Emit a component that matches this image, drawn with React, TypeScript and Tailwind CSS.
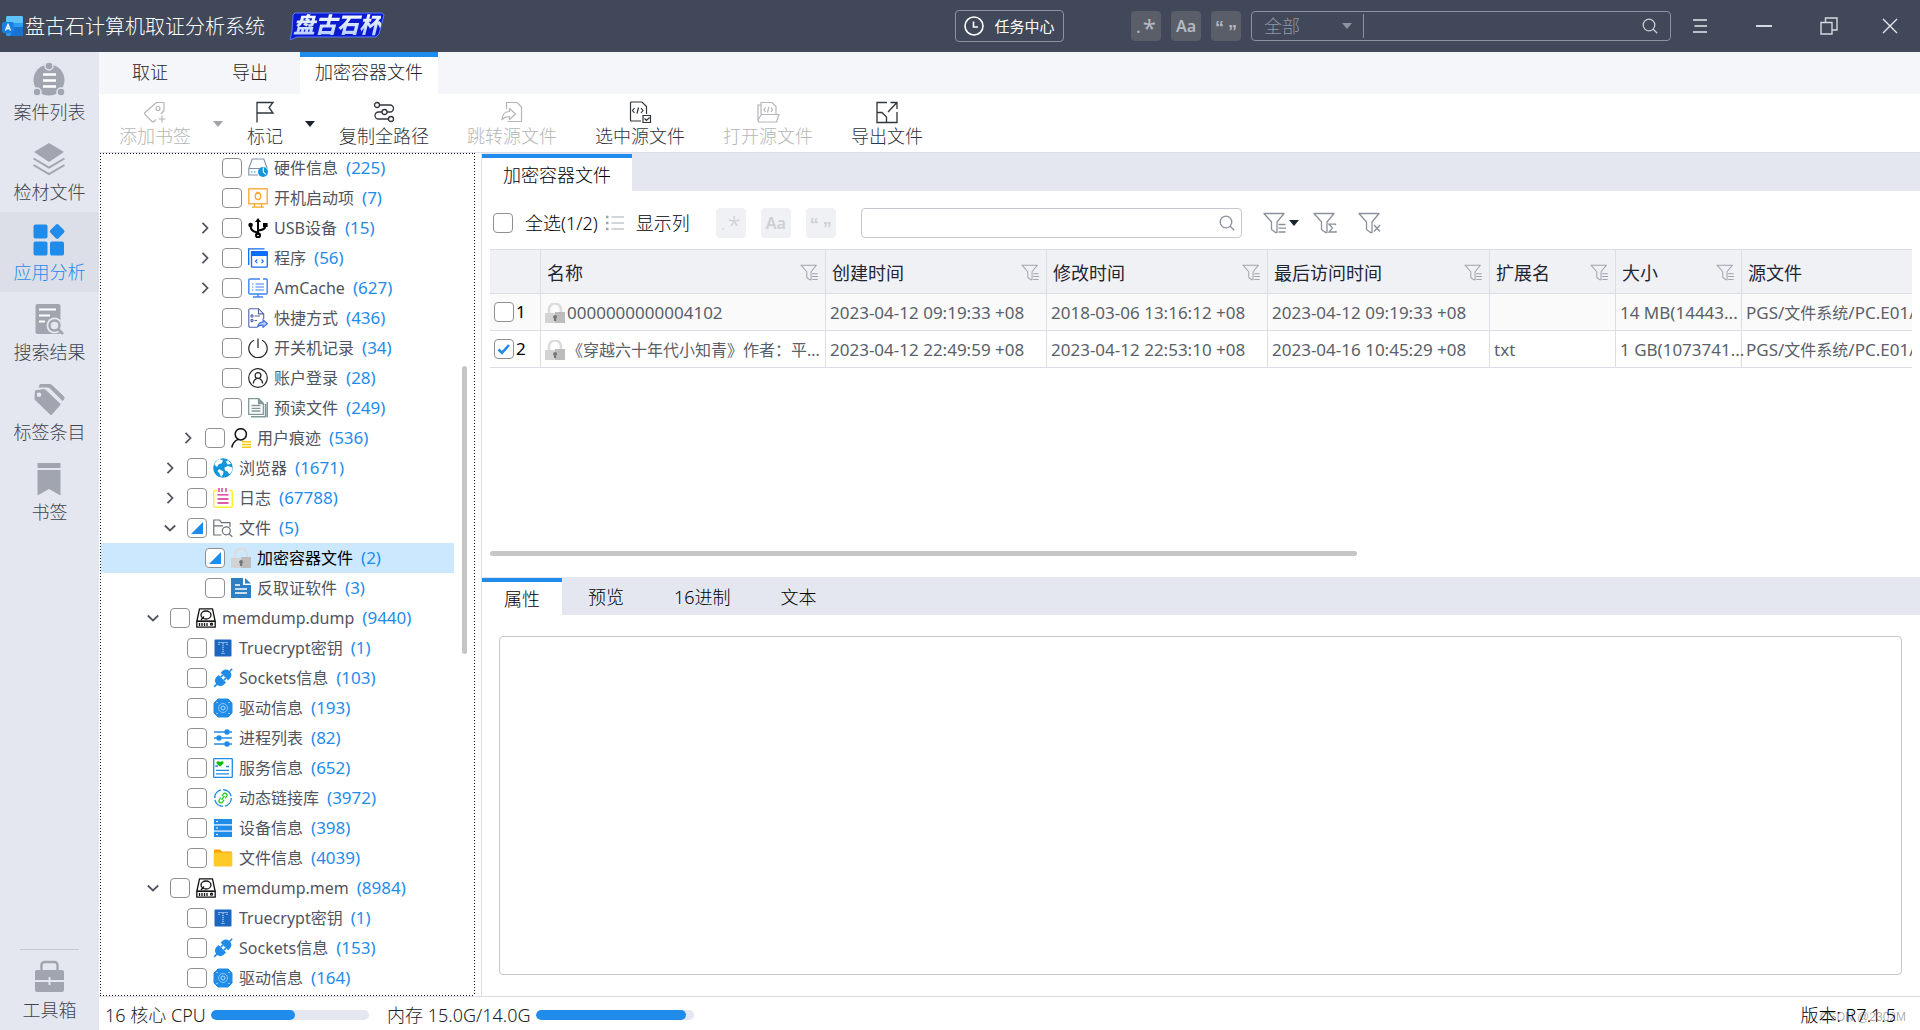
import React from "react";

const LATIN = "font-['Noto_Sans','Noto_Sans_CJK_SC',sans-serif]";

type IconProps = { className?: string };

/* ---------- shared glyphs ---------- */

const Caret = ({ className = "" }: IconProps) => (
  <svg viewBox="0 0 10 6" className={`h-1.5 w-2.5 ${className}`} fill="currentColor">
    <path d="M0 0h10L5 6z" />
  </svg>
);

const Magnifier = ({ className = "" }: IconProps) => (
  <svg viewBox="0 0 16 16" className={`size-4 ${className}`} fill="none" stroke="currentColor" strokeWidth="1.3">
    <circle cx="7" cy="7" r="5.8" />
    <path d="M11.2 11.2 15.2 15.2" />
  </svg>
);

const Funnel = ({ kind, className = "" }: { kind: "list" | "sum" | "clear"; className?: string }) => (
  <svg viewBox="0 0 24 22" className={className} fill="none" stroke="currentColor" strokeWidth="1.3">
    <path d="M1 1.5h20l-7 8.5v10.5h-1.5L8.5 17.5V10z" strokeLinejoin="round" />
    {kind === "list" && <path d="M15.5 12.5h7M15.5 16.2h7.5M15.5 20h7" />}
    {kind === "sum" && <path d="M22.5 13.2v-1H16l3.5 3.8L16 20h7v-1.3" fill="none" />}
    {kind === "clear" && <path d="m16 13 6 6.5M22 13l-6 6.5" />}
  </svg>
);

const Lock = ({ className = "" }: IconProps) => (
  <svg viewBox="0 0 20 20" className={`size-5 shrink-0 ${className}`}>
    <path d="M4 10V6.5a6 6 0 0 1 12 0V10" fill="none" stroke="#dcdcdc" strokeWidth="2.6" />
    <path d="M0 10h20v10H0z" fill="#d3d3d3" />
    <path d="M10 9h10v11H10z" fill="#bcbcbc" />
    <path d="M10 12a2 2 0 0 1 1.2 3.6V18H8.9v-2.4A2 2 0 0 1 10 12z" fill="#777" />
  </svg>
);

/* ---------- tree icons ---------- */

const svg20 = "size-5 shrink-0";

const icons: Record<string, React.ReactNode> = {
  hardware: (
    <svg viewBox="0 0 20 20" className={svg20} fill="none" stroke="#7f90a8" strokeWidth="1.1">
      <path d="M.8 10.5 4.2 1h11.6l3.4 9.5M.8 10.5V17H10M.8 10.5h11" />
      <path d="M3 14h1.5M6 14h1.5" stroke="#1296db" />
      <circle cx="15" cy="14" r="5" fill="#1296db" stroke="none" />
      <path d="M15.3 9.5v4.6l2.6 2.2" stroke="#fff" />
    </svg>
  ),
  startup: (
    <svg viewBox="0 0 20 20" className={svg20} fill="none" stroke="#f8a72c" strokeWidth="1.3">
      <rect x=".8" y=".8" width="18.4" height="15" />
      <path d="M6.5 16v3M13.5 16v3M4 19.2h12" />
      <ellipse cx="10" cy="8.3" rx="2.8" ry="3.3" />
      <path d="M9 5V3.8M11 5V3.8" />
    </svg>
  ),
  usb: (
    <svg viewBox="0 0 20 20" className={svg20} fill="none" stroke="#000" strokeWidth="2">
      <path d="M10 17V3M10 14.5c-4-.5-7.3-1.7-7.3-6M10 12.5c4-.5 7.3-1 7.3-4.5" />
      <path d="m7 4 3-4 3 4zM15 5h4.6v4H15z" fill="#000" stroke="none" />
      <circle cx="2.6" cy="7" r="2.3" fill="#000" stroke="none" />
      <circle cx="10" cy="17.3" r="2" />
    </svg>
  ),
  program: (
    <svg viewBox="0 0 20 20" className={svg20} fill="none" stroke="#0b6dfb" strokeWidth="1.3">
      <path d="M.7 17V.8H16.5" />
      <rect x="3.5" y="3.6" width="15.8" height="15.6" rx=".8" />
      <path d="M3 3h16.5v5H3z" fill="#0b6dfb" stroke="none" />
      <path d="m9.300 11.500-1.800 1.800 1.800 1.800M13.500 11.500l1.800 1.800-1.800 1.800" strokeWidth="1.100" />
    </svg>
  ),
  amcache: (
    <svg viewBox="0 0 20 20" className={svg20} fill="none" stroke="#3f83f8" strokeWidth="1.4">
      <path d="M12 1H1.8a1 1 0 0 0-1 1v13a1 1 0 0 0 1 1h16.4a1 1 0 0 0 1-1V2a1 1 0 0 0-1-1H15M10 16v3M5 19h10" />
      <path d="M4 6h1.4M4 9h1.4M4 12h1.4M7.500 6H16M7.500 9H16M7.500 12H16" strokeWidth="1.200" />
    </svg>
  ),
  shortcut: (
    <svg viewBox="0 0 20 20" className={svg20} fill="none" stroke="#4f62a8" strokeWidth="1.1">
      <path d="M9 19.3H2a1.2 1.2 0 0 1-1.2-1.2V1.9A1.2 1.2 0 0 1 2 .7h8.5l5.2 5.2V11M10.5.7v5.2h5" />
      <circle cx="4" cy="8" r="1.1" />
      <circle cx="4" cy="12.5" r="1.1" />
      <path d="M6.5 8H12M6.5 12.5H9" />
      <path d="M9.5 18.800c.8-3.300 2.400-4.700 5.500-4.700v-2.300l4.400 4-4.400 3.600v-2.200c-2.400-.2-4 .4-5.500 1.600z" fill="#b9cffb" stroke="#3f6fe0" />
    </svg>
  ),
  power: (
    <svg viewBox="0 0 20 20" className={svg20} fill="none" stroke="#222" strokeWidth="1.2">
      <path d="M10 .5V10M6 2.200a9.200 9.200 0 1 0 8 0" />
    </svg>
  ),
  account: (
    <svg viewBox="0 0 20 20" className={svg20} fill="none" stroke="#222" strokeWidth="1.2">
      <circle cx="10" cy="10" r="9.300" />
      <circle cx="10" cy="7.500" r="2.900" />
      <path d="M5.300 15.500c.2-3 1.700-4.300 3.400-5M14.700 15.500c-.2-3-1.700-4.300-3.400-5" />
    </svg>
  ),
  prefetch: (
    <svg viewBox="0 0 20 20" className={svg20} fill="none" stroke="#82989a" strokeWidth="1.300">
      <path d="M.7.7h9.800l4.800 4.800v10.800H.7z" />
      <path d="M10.500.7v4.800h4.800z" fill="#82989a" />
      <path d="M3.500 7.500h9M3.500 10.300h9M3.500 13h9" />
      <path d="M3 18.700h14.500V6M19.300 4v15.300" strokeWidth="1.500" />
    </svg>
  ),
  trace: (
    <svg viewBox="0 0 20 20" className={svg20} fill="none">
      <circle cx="9.800" cy="6.300" r="5.600" stroke="#111" strokeWidth="1.500" />
      <path d="M7 11.300C3.500 13 1.500 15.500.8 19.500" stroke="#111" strokeWidth="1.500" />
      <path d="M11 13.800h9M11 16.500h9M11 19.200h9" stroke="#fbc614" strokeWidth="1.500" />
    </svg>
  ),
  browser: (
    <svg viewBox="0 0 20 20" className={svg20}>
      <circle cx="10" cy="10" r="9.800" fill="#1296db" />
      <path d="M6.500 1 10 2.500 8.500 5.500l-2.500.5-2 3-2.700-2.500C2.500 4 4 2 6.500 1zM15 2l3 4-3.500.500-1.500-2.500zM11.500 9.500l3.500-1.500 4.500 1.500c0 3-1 5-3 7l-2-3-2.500-1zM6 11l4.500 2.500-.5 3-2 2.500-1.500-3.500-2-2.500z" fill="#fff" />
    </svg>
  ),
  log: (
    <svg viewBox="0 0 20 20" className={svg20} fill="none">
      <path d="M4 2.500H2.200A1.500 1.500 0 0 0 .7 4v13.700a1.500 1.500 0 0 0 1.500 1.500h15.600a1.500 1.500 0 0 0 1.500-1.500V4a1.500 1.500 0 0 0-1.500-1.500H16" stroke="#fbf02c" strokeWidth="1.400" />
      <path d="M6 0v4M9 0v4M13 0v4M4.500 6.800h11M4.500 11h11M4.500 15h11" stroke="#d6248f" strokeWidth="1.300" />
    </svg>
  ),
  folderSearch: (
    <svg viewBox="0 0 20 20" className={svg20} fill="none" stroke="#6b6f78" strokeWidth="1.200">
      <path d="M8.500 17H.8V2h5.700l2 2.700H17V9M.8 7.800H10" />
      <circle cx="13.300" cy="12.800" r="4" />
      <path d="m16 15.800 3.300 3" />
    </svg>
  ),
  lock: <Lock />,
  doc: (
    <svg viewBox="0 0 20 20" className={svg20}>
      <path d="M0 0h12v7h8v13H0z" fill="#2f7fc4" />
      <path d="M14 0l6 5.500h-6z" fill="#2f7fc4" />
      <path d="M4 7h5M4 11h12M4 15h12" stroke="#fff" strokeWidth="1.600" />
    </svg>
  ),
  disk: (
    <svg viewBox="0 0 20 20" className={svg20} fill="none" stroke="#111" strokeWidth="1.300">
      <path d="M.8 13.500 3.500.8h13l2.700 12.700v5.700H.8z" strokeLinejoin="round" />
      <path d="M.8 13.200h18.400" strokeWidth="1.700" />
      <ellipse cx="10" cy="7" rx="5" ry="4" />
      <path d="M8 8.500 5 12M3.500 15v3M6 15v3M8.500 15v3M11 15v3" />
      <circle cx="15.500" cy="16.200" r="1" />
    </svg>
  ),
  truecrypt: (
    <svg viewBox="0 0 20 20" className={svg20}>
      <rect x="1.500" y="1.500" width="17" height="17" rx="1" fill="#1a66c0" />
      <path d="M6 7V4.500h8V7M8.500 15.500h3M10 5v10" fill="none" stroke="#cfe3fa" strokeWidth="1.100" strokeDasharray="1.200 .8" />
    </svg>
  ),
  sockets: (
    <svg viewBox="0 0 20 20" className={svg20} fill="#208ce9">
      <g transform="rotate(45 10 10)">
        <path d="M9.200-3h1.600v3.500c2.800.4 4.500 2.500 4.500 5V8H4.700V5.500c0-2.500 1.700-4.600 4.500-5z" />
        <path d="M7 8h1.600v3H7zM11.400 8H13v3h-1.600z" />
        <path d="M4.700 11h10.600v3c0 2.500-1.700 4.600-4.500 5V22.500H9.200V19c-2.800-.4-4.500-2.500-4.500-5z" />
      </g>
    </svg>
  ),
  driver: (
    <svg viewBox="0 0 20 20" className={svg20}>
      <path d="M5 1h10l4 4v10l-4 4H5l-4-4V5z" fill="#208ce9" stroke="#208ce9" strokeLinejoin="round" />
      <circle cx="10" cy="10" r="4.500" fill="none" stroke="#8cc4f6" />
      <circle cx="10" cy="10" r="2" fill="none" stroke="#b8dbfa" />
      <path d="M3.500 4.500h1M15.500 4.500h1M3.500 15.500h1M15.500 15.500h1" stroke="#fff" />
    </svg>
  ),
  process: (
    <svg viewBox="0 0 20 20" className={svg20} fill="#208ce9" stroke="#208ce9" strokeWidth="1.600">
      <path d="M1 4h18M1 10h18M1 16h18" />
      <circle cx="14" cy="4" r="1.900" />
      <circle cx="6" cy="10" r="1.900" />
      <circle cx="14" cy="16" r="1.900" />
    </svg>
  ),
  service: (
    <svg viewBox="0 0 20 20" className={svg20} fill="none" stroke="#208ce9" strokeWidth="1.300">
      <rect x=".7" y=".7" width="18.600" height="18.600" rx=".6" />
      <path d="M3 9V8h2M13 8.500h3M3 12.300h13M3 15.800h13" />
      <path d="M7 8.800 3.500 5.500C3 3 5.500 2.500 7 4c1.500-1.500 4-1 3.500 1.500z" fill="#12b812" stroke="none" />
    </svg>
  ),
  link: (
    <svg viewBox="0 0 20 20" className={svg20} fill="none" strokeWidth="1.400">
      <circle cx="10" cy="10" r="8.300" stroke="#208ce9" strokeDasharray="11 2" />
      <g stroke="#1fc41f" strokeWidth="1.200" transform="rotate(35 10 10)">
        <path d="M8 9V6.500a2 2 0 0 1 4 0V9M8 11v2.500a2 2 0 0 0 4 0V11M10 7.500v5" />
      </g>
    </svg>
  ),
  device: (
    <svg viewBox="0 0 20 20" className={svg20}>
      <path d="M1 1h18v5H1zM1 7.500h18v5H1zM1 14h18v5H1z" fill="#208ce9" />
      <path d="M1 6.800h18M1 13.300h18" stroke="#9fd0fa" />
      <path d="M3 3.500h2M3 10h2M3 16.500h2" stroke="#fff" />
    </svg>
  ),
  folder: (
    <svg viewBox="0 0 20 20" className={svg20}>
      <path d="M1 2.500q0-1 1-1h5l2 2h9q1 0 1 1V8H1z" fill="#ffa000" />
      <rect x=".7" y="4.500" width="18.600" height="14" rx="1" fill="#ffca28" />
    </svg>
  ),
};

/* ---------- checkbox ---------- */

type CheckState = "off" | "on" | "partial";

const Check = ({ state = "off", label }: { state?: CheckState; label: string }) => (
  <span className="grid size-5 shrink-0 place-items-center">
    <input
      type="checkbox"
      aria-label={label}
      defaultChecked={state === "on"}
      ref={(el) => {
        if (el) el.indeterminate = state === "partial";
      }}
      className="col-start-1 row-start-1 size-5 appearance-none rounded border border-[#909090] bg-white"
    />
    {state === "on" && (
      <svg viewBox="0 0 20 20" className="pointer-events-none col-start-1 row-start-1 size-5" fill="none" stroke="#1f8ceb" strokeWidth="2.600">
        <path d="m4.500 10.500 3.500 3.300 7-7.800" />
      </svg>
    )}
    {state === "partial" && (
      <svg viewBox="0 0 20 20" className="pointer-events-none col-start-1 row-start-1 size-5" fill="#1f8ceb">
        <path d="M16 4v12H4z" />
      </svg>
    )}
  </span>
);

/* ---------- tree ---------- */

type Node = {
  level: 0 | 1 | 2 | 3;
  icon: string;
  text: string;
  count: number;
  open?: boolean;
  state?: CheckState;
  selected?: boolean;
};

const nodes: Node[] = [
  { level: 3, icon: "hardware", text: "硬件信息", count: 225 },
  { level: 3, icon: "startup", text: "开机启动项", count: 7 },
  { level: 3, icon: "usb", text: "USB设备", count: 15, open: false },
  { level: 3, icon: "program", text: "程序", count: 56, open: false },
  { level: 3, icon: "amcache", text: "AmCache", count: 627, open: false },
  { level: 3, icon: "shortcut", text: "快捷方式", count: 436 },
  { level: 3, icon: "power", text: "开关机记录", count: 34 },
  { level: 3, icon: "account", text: "账户登录", count: 28 },
  { level: 3, icon: "prefetch", text: "预读文件", count: 249 },
  { level: 2, icon: "trace", text: "用户痕迹", count: 536, open: false },
  { level: 1, icon: "browser", text: "浏览器", count: 1671, open: false },
  { level: 1, icon: "log", text: "日志", count: 67788, open: false },
  { level: 1, icon: "folderSearch", text: "文件", count: 5, open: true, state: "partial" },
  { level: 2, icon: "lock", text: "加密容器文件", count: 2, state: "partial", selected: true },
  { level: 2, icon: "doc", text: "反取证软件", count: 3 },
  { level: 0, icon: "disk", text: "memdump.dump", count: 9440, open: true },
  { level: 1, icon: "truecrypt", text: "Truecrypt密钥", count: 1 },
  { level: 1, icon: "sockets", text: "Sockets信息", count: 103 },
  { level: 1, icon: "driver", text: "驱动信息", count: 193 },
  { level: 1, icon: "process", text: "进程列表", count: 82 },
  { level: 1, icon: "service", text: "服务信息", count: 652 },
  { level: 1, icon: "link", text: "动态链接库", count: 3972 },
  { level: 1, icon: "device", text: "设备信息", count: 398 },
  { level: 1, icon: "folder", text: "文件信息", count: 4039 },
  { level: 0, icon: "disk", text: "memdump.mem", count: 8984, open: true },
  { level: 1, icon: "truecrypt", text: "Truecrypt密钥", count: 1 },
  { level: 1, icon: "sockets", text: "Sockets信息", count: 153 },
  { level: 1, icon: "driver", text: "驱动信息", count: 164 },
];

const indent = ["pl-[42px]", "pl-[59px]", "pl-[77px]", "pl-[94px]"];

/* A one-pixel focus frame made of separate dots, three pixels apart. */
const dotted =
  "p-px [background-image:linear-gradient(90deg,#111_1px,transparent_1px),linear-gradient(90deg,#111_1px,transparent_1px),linear-gradient(#111_1px,transparent_1px),linear-gradient(#111_1px,transparent_1px)] [background-size:3px_1px,3px_1px,1px_3px,1px_3px] [background-position:0_0,0_100%,0_0,100%_0] [background-repeat:repeat-x,repeat-x,repeat-y,repeat-y]";

const Tree = () => (
  <div className={`flex w-[375px] shrink-0 overflow-hidden ${dotted}`}>
    <ul className="-mt-px w-[353px] shrink-0">
      {nodes.map((n, i) => (
        <li key={i} className={`flex h-[30px] items-center ${indent[n.level]} ${n.selected ? "bg-[#cce8ff] text-black" : "text-[#50555f]"}`}>
          <button type="button" aria-label="展开" className={`mr-[7px] flex w-5 justify-center ${n.open === undefined ? "invisible" : ""}`}>
            <svg viewBox="0 0 12 12" className={`size-3 ${n.open ? "rotate-90" : ""}`} fill="none" stroke="#50555f" strokeWidth="1.800">
              <path d="m3.500.8 5 5.200-5 5.200" />
            </svg>
          </button>
          <Check state={n.state} label={n.text} />
          <span className="mr-1.5 ml-1.5">{icons[n.icon]}</span>
          <span className="text-base whitespace-nowrap">{n.text}</span>
          <span className="ml-2 text-[17px] text-[#1f8ceb]">({n.count})</span>
        </li>
      ))}
    </ul>
    <div className="mt-[212px] ml-[8px] h-[288px] w-[5px] rounded-full bg-[#c6c6c6]" />
  </div>
);

/* ---------- sidebar ---------- */

const sideIcons = {
  cases: (
    <svg viewBox="1 0 34 34" className="size-[34px]" fill="#a0a5af">
      <circle cx="17" cy="18" r="15.500" />
      <g stroke="#e4e7ef" strokeWidth="1.500">
        <circle cx="17" cy="4" r="4" />
        <circle cx="5" cy="30" r="4" />
        <circle cx="29" cy="30" r="4" />
      </g>
      <path d="M11 12.500h13M11 18.500h13M11 24.500h13" stroke="#fff" strokeWidth="2.400" />
    </svg>
  ),
  layers: (
    <svg viewBox="1 0 34 34" className="size-[34px]" fill="none" stroke="#a0a5af" strokeWidth="2">
      <path d="M17 1 32 10 17 20 2 10z" fill="#a0a5af" stroke="none" />
      <path d="m1.500 16.500 15.500 9 15.500-9M1.500 23 17 32l15.500-9" />
    </svg>
  ),
  apps: (
    <svg viewBox="1 0 34 34" className="size-[34px]" fill="#1f8ceb">
      <rect x="1.500" y="2.500" width="14" height="14" rx="2" />
      <rect x="1.500" y="19.500" width="14" height="14" rx="2" />
      <rect x="18" y="19.500" width="14" height="14" rx="2" />
      <rect x="19.500" y="3.500" width="11.500" height="11.500" rx="2" transform="rotate(45 25 9.300)" />
    </svg>
  ),
  search: (
    <svg viewBox="1 0 34 34" className="size-[34px]" fill="none">
      <rect x="3.500" y="2" width="25" height="30" rx="2" fill="#a0a5af" />
      <path d="M7 7.500h17M7 13.500h11M7 19.500h6" stroke="#fff" strokeWidth="2" />
      <circle cx="22.500" cy="23.500" r="8" fill="#e4e7ef" />
      <circle cx="22.500" cy="23.500" r="5" stroke="#a0a5af" strokeWidth="2.400" />
      <path d="m26 27 5 5" stroke="#a0a5af" strokeWidth="2.600" />
    </svg>
  ),
  tags: (
    <svg viewBox="1 0 34 34" className="size-[34px]" fill="#a0a5af">
      <path d="M8 2h9.500q1.500 0 2.500 1L32 14.500q1.500 1.500 0 3l-1.500 1.500L18 6.500q-1-1-2.500-1H6.500z" />
      <path fillRule="evenodd" d="M3 8.500 11.500 7q1.500 0 2.500 1L28 21.500q1 1 0 2L20 32.500q-1 1-2 0L3.500 18.500q-1-1-1-2zM7 10.500a2.300 2.300 0 1 0 0 4.600 2.300 2.300 0 0 0 0-4.600z" />
    </svg>
  ),
  bookmark: (
    <svg viewBox="1 0 34 34" className="size-[34px]" fill="#a0a5af">
      <path d="M5.500 1h23v5h-23zM5.500 8h23v25.500L17 27 5.500 33.500z" />
    </svg>
  ),
  toolbox: (
    <svg viewBox="0 0 34 34" className="size-[34px]">
      <path d="M8.500 11V5a3 3 0 0 1 3-3h10a3 3 0 0 1 3 3v6" fill="none" stroke="#a0a5af" strokeWidth="2.400" />
      <path d="M2 12q0-2 2-2h25q2 0 2 2v8H2zM2 22h29v8q0 2-2 2H4q-2 0-2-2z" fill="#a0a5af" />
      <path d="M16.500 17v8" stroke="#e4e7ef" strokeWidth="2" />
    </svg>
  ),
};

const sideItems: { label: string; icon: keyof typeof sideIcons; active?: boolean }[] = [
  { label: "案件列表", icon: "cases" },
  { label: "检材文件", icon: "layers" },
  { label: "应用分析", icon: "apps", active: true },
  { label: "搜索结果", icon: "search" },
  { label: "标签条目", icon: "tags" },
  { label: "书签", icon: "bookmark" },
];

const SideButton = ({ label, icon, active }: (typeof sideItems)[number]) => (
  <button
    type="button"
    className={`flex h-20 w-full flex-col items-center gap-1 pt-2.5 text-lg leading-6 font-light ${active ? "bg-[#dcdfe7] text-[#1f8ceb]" : "text-[#3f444d]"}`}
  >
    {sideIcons[icon]}
    {label}
  </button>
);

/* ---------- toolbar icons ---------- */

const tool = "h-6 w-6";
const toolIcons = {
  addTag: (
    <svg viewBox="0 0 24 24" className={tool} fill="none" stroke="currentColor" strokeWidth="1.200">
      <path d="M13 19.500 11 21.500q-1 1-2 0L2 14.500q-1-1 0-2L13.500 2.500H21v8l-3 3.500" strokeLinejoin="round" />
      <circle cx="15" cy="8.500" r="2" />
      <path d="M19 15.500v7M15.500 19h7" />
    </svg>
  ),
  flag: (
    <svg viewBox="0 0 24 24" className={tool} fill="none" stroke="currentColor" strokeWidth="1.300">
      <path d="M4 22.500V2.500h16l-4 5 4 5.500H4" />
    </svg>
  ),
  path: (
    <svg viewBox="0 0 24 24" className={tool} fill="none" stroke="currentColor" strokeWidth="1.300">
      <circle cx="5" cy="5" r="2.500" />
      <circle cx="12.500" cy="12" r="2.500" />
      <circle cx="19" cy="19" r="2.500" />
      <path d="M7.500 5H18a3.500 3.500 0 0 1 0 7h-3M10 12H6.500a3.500 3.500 0 0 0 0 7h10" />
    </svg>
  ),
  jump: (
    <svg viewBox="0 0 24 24" className={tool} fill="none" stroke="currentColor" strokeWidth="1.200">
      <path d="M6.500 9V2.500h10.500l4.500 4.500v14.500h-14" />
      <path d="M2 19.500c.5-5.500 3-8 7.500-8V8.500l6 5.500-6 5.500v-3c-3.500 0-5.500 1-7.500 3z" strokeLinejoin="round" />
    </svg>
  ),
  select: (
    <svg viewBox="0 0 24 24" className={tool} fill="none" stroke="currentColor" strokeWidth="1.200">
      <path d="M13 21H3.500a1 1 0 0 1-1-1V3a1 1 0 0 1 1-1h10.500l4.500 4.500V14M6.500 8l-2 2.500 2 2.500M13 8l2 2.500-2 2.500M10.500 7.500l-1.500 6" />
      <path d="M15 15.500h7.500v7H15zM16.500 18.500l2 2 3-3" />
    </svg>
  ),
  open: (
    <svg viewBox="0 0 24 24" className={tool} fill="none" stroke="currentColor" strokeWidth="1.200">
      <path d="M2 20V5h3M5 14.500V2.500h11l4 4v8M2 20l3.500-5.500h17.500l-2.500 7.500H2.500zM9.500 7.500 8 9.700 9.500 12M15 7.500l1.500 2.200L15 12M12.800 7l-1.300 5.500" />
    </svg>
  ),
  exportFile: (
    <svg viewBox="0 0 24 24" className={tool} fill="none" stroke="currentColor" strokeWidth="1.300">
      <path d="M12 2.500H2v20h20V12M2 12.500h5l4.500 4.500v5M15.500 2.500H22V9M22 2.500 13 12" />
    </svg>
  ),
};

const Tool = ({ icon, label, disabled }: { icon: keyof typeof toolIcons; label: string; disabled?: boolean }) => (
  <button
    type="button"
    disabled={disabled}
    className={`flex flex-col items-center text-lg leading-6 font-light whitespace-nowrap ${disabled ? "text-[#b4b6ba]" : "text-[#30343b]"}`}
  >
    {toolIcons[icon]}
    {label}
  </button>
);

/* ---------- search mode toggles ---------- */

const Modes = ({ dark }: { dark?: boolean }) => {
  const box = dark ? "bg-[#5a5e68] text-[#b4b8c0]" : "bg-[#f0f1f5] text-[#cdcfd4]";
  const base = "flex size-[30px] items-center justify-center rounded";
  return (
    <div className={`flex ${dark ? "gap-2.5" : "gap-[15px]"}`}>
      <button type="button" aria-label="正则表达式" className={`${base} ${box} gap-0.5`}>
        <span className="text-lg">.</span>
        <span className="pt-1 text-2xl leading-6">*</span>
      </button>
      <button type="button" aria-label="区分大小写" className={`${base} ${box} text-base font-semibold`}>
        Aa
      </button>
      <button type="button" aria-label="全字匹配" className={`${base} ${box} gap-1 font-['Liberation_Sans',sans-serif] text-lg font-bold`}>
        <span className="pt-1">“</span>
        <span className="pt-3">”</span>
      </button>
    </div>
  );
};

/* ---------- table ---------- */

const columns = [
  { name: "名称", filter: true },
  { name: "创建时间", filter: true },
  { name: "修改时间", filter: true },
  { name: "最后访问时间", filter: true },
  { name: "扩展名", filter: true },
  { name: "大小", filter: true },
  { name: "源文件", filter: false },
];

const rows = [
  {
    checked: false,
    name: "0000000000004102",
    big: true,
    cells: ["2023-04-12 09:19:33 +08", "2018-03-06 13:16:12 +08", "2023-04-12 09:19:33 +08", "", "14 MB(14443..."],
  },
  {
    checked: true,
    name: "《穿越六十年代小知青》作者：平...",
    big: false,
    cells: ["2023-04-12 22:49:59 +08", "2023-04-12 22:53:10 +08", "2023-04-16 10:45:29 +08", "txt", "1 GB(1073741..."],
  },
];

const cell = "border-r border-b border-[#dcdee6] pt-0.5 pl-1 whitespace-nowrap";

const FileTable = () => (
  <div className="mr-2 ml-2 overflow-hidden">
    <table className="w-full table-fixed border-separate border-spacing-0 text-left">
      <colgroup>
        <col className="w-[51px]" />
        <col className="w-[285px]" />
        <col className="w-[221px]" />
        <col className="w-[221px]" />
        <col className="w-[222px]" />
        <col className="w-[126px]" />
        <col className="w-[126px]" />
        <col />
      </colgroup>
      <thead>
        <tr className="h-[45px] bg-[#f0f1f5] text-lg text-[#1f2531]">
          <th className="border-t border-r border-b border-[#dcdee6]" aria-label="序号" />
          {columns.map((c) => (
            <th key={c.name} className={`border-t border-b border-[#dcdee6] pt-0.5 pr-1.5 pl-1.5 font-normal ${c.filter ? "border-r" : ""}`}>
              <span className="flex items-center justify-between">
                {c.name}
                {c.filter && <Funnel kind="list" className="h-[17px] w-[19px] text-[#a0a4ad]" />}
              </span>
            </th>
          ))}
        </tr>
      </thead>
      <tbody>
        {rows.map((r, i) => (
          <tr key={r.name} className={`h-[37px] text-[#5a5f69] ${i === 0 ? "bg-[#fafafa]" : "bg-white"}`}>
            <td className="border-r border-b border-[#dcdee6] pl-1 text-[17px] text-black">
              <span className="flex items-center gap-0.5">
                <Check state={r.checked ? "on" : "off"} label={`选择第${i + 1}行`} />
                {i + 1}
              </span>
            </td>
            <td className={cell}>
              <span className={`flex items-center gap-0.5 ${r.big ? "text-[17px]" : "text-base"}`}>
                <Lock />
                {r.name}
              </span>
            </td>
            {r.cells.map((c, j) => (
              <td key={j} className={`${cell} text-[17px]`}>
                {c}
              </td>
            ))}
            <td className="border-b border-[#dcdee6] pt-0.5 pl-1 text-[17px] whitespace-nowrap">
              PGS/<span className="text-base">文件系统</span>/PC.E01/
            </td>
          </tr>
        ))}
      </tbody>
    </table>
  </div>
);

const Meter = ({ value, label }: { value: number; label: string }) => (
  <div role="meter" aria-label={label} aria-valuenow={value} className="h-2.5 w-[158px] overflow-hidden rounded-full bg-[#e4e7ef]">
    <div className="h-full rounded-full bg-[#1f8ceb]" style={{ width: `${value}%` }} />
  </div>
);

/* ---------- page ---------- */

export default function App() {
  return (
    <div className={`flex h-screen flex-col overflow-hidden bg-white ${LATIN}`}>
      <header className="flex h-[52px] shrink-0 items-center bg-[#404859] text-white">
        <svg viewBox="0 0 22 22" className="ml-0.5 size-[22px]">
          <rect x="4" y="1" width="17" height="20" rx="1.500" fill="#2a9df4" />
          <path d="M4 2.500Q4 1 5.500 1h14Q21 1 21 2.500V8H4z" fill="#5cc3fb" />
          <path d="M12 12h9v7.500q0 1.500-1.500 1.500H8z" fill="#1673d1" />
          <rect x="0" y="7" width="12" height="11" rx="2" fill="#1b7fe0" />
          <path d="m3.500 15.500 2.500-6 2.500 6M4.500 13.500h3" fill="none" stroke="#fff" strokeWidth="1.300" />
        </svg>
        <h1 className="ml-px pt-0.5 text-xl font-light whitespace-nowrap">盘古石计算机取证分析系统</h1>
        <div className="ml-6 grid place-items-center">
          <svg viewBox="0 0 96 28" className="col-start-1 row-start-1 h-7 w-24">
            <path d="M4 3 6 1h87l2 2-5 19-3 3H8l-7 3 2-9z" fill="#0a1ad0" stroke="#5a7cff" />
          </svg>
          <span className="col-start-1 row-start-1 bg-gradient-to-b from-white to-[#a9c4ff] bg-clip-text pb-1 text-[22px] leading-6 font-black text-transparent italic">
            盘古石杯
          </span>
        </div>

        <div className="ml-auto flex items-center">
          <button type="button" className="flex h-8 w-[109px] items-center justify-center gap-2.5 rounded border border-[#8d939e] text-[15px]">
            <svg viewBox="0 0 20 20" className="size-5" fill="none" stroke="#fff" strokeWidth="1.600">
              <circle cx="10" cy="10" r="9" />
              <path d="M9.500 5.500v5.500H14" />
            </svg>
            任务中心
          </button>
          <div className="ml-[67px]">
            <Modes dark />
          </div>
          <div className="ml-2.5 flex h-[30px] w-[420px] items-center rounded border border-[#8d939e]">
            <label className="grid w-[112px] items-center">
              <select
                aria-label="搜索范围"
                className="col-start-1 row-start-1 w-full appearance-none border-r border-[#8d939e] bg-transparent pl-3 text-lg leading-6 font-light text-[#9298a3]"
              >
                <option>全部</option>
              </select>
              <Caret className="pointer-events-none col-start-1 row-start-1 mr-3 justify-self-end text-[#8d939e]" />
            </label>
            <input aria-label="搜索" className="h-full min-w-0 flex-1 bg-transparent px-2 outline-none" />
            <Magnifier className="mr-3 text-[#c8ccd2]" />
          </div>
          <button type="button" aria-label="菜单" className="ml-[21px]">
            <svg viewBox="0 0 16 16" className="size-4" stroke="#e6e8ec" strokeWidth="1.500">
              <path d="M1 2h14M2.500 8h12.500M1 14h14" />
            </svg>
          </button>
          <button type="button" aria-label="最小化" className="ml-12">
            <svg viewBox="0 0 16 16" className="size-4" stroke="#d6d9de" strokeWidth="2">
              <path d="M0 8h16" />
            </svg>
          </button>
          <button type="button" aria-label="还原" className="ml-12">
            <svg viewBox="0 0 18 18" className="size-[18px]" fill="none" stroke="#d6d9de" strokeWidth="1.400">
              <path d="M5.500 5V1h11.500v12H12M1 5.500h11V17H1z" />
            </svg>
          </button>
          <button type="button" aria-label="关闭" className="mr-[22px] ml-11">
            <svg viewBox="0 0 16 16" className="size-4" stroke="#e6e8ec" strokeWidth="1.400">
              <path d="m1 1 14 14M15 1 1 15" />
            </svg>
          </button>
        </div>
      </header>

      <div className="flex min-h-0 flex-1">
        <nav className="flex w-[99px] shrink-0 flex-col bg-[#e4e7ef]">
          {sideItems.map((s) => (
            <SideButton key={s.label} {...s} />
          ))}
          <div className="mx-5 mt-auto border-t border-[#c6c9cd]" />
          <SideButton label="工具箱" icon="toolbox" />
        </nav>

        <div className="flex min-w-0 flex-1 flex-col">
          <div role="tablist" className="flex h-[42px] shrink-0 bg-[#f5f6fa] pl-px text-lg font-light text-[#222]">
            <button type="button" role="tab" className="w-[100px] pb-0.5">取证</button>
            <button type="button" role="tab" className="w-[100px] pb-0.5">导出</button>
            <button type="button" role="tab" aria-selected="true" className="border-t-5 border-[#1f8ceb] bg-white px-[15px] pb-[7px]">
              加密容器文件
            </button>
          </div>

          <div className="flex h-[59px] shrink-0 items-center border-b border-[#dcdee6] pt-0.5 pl-5">
            <Tool icon="addTag" label="添加书签" disabled />
            <button type="button" aria-label="书签选项" className="ml-[22px] text-[#a0a3a8]"><Caret /></button>
            <div className="ml-6"><Tool icon="flag" label="标记" /></div>
            <button type="button" aria-label="标记选项" className="mr-6 ml-[22px] text-[#1c2430]"><Caret /></button>
            <div className="flex gap-[38px]">
              <Tool icon="path" label="复制全路径" />
              <Tool icon="jump" label="跳转源文件" disabled />
              <Tool icon="select" label="选中源文件" />
              <Tool icon="open" label="打开源文件" disabled />
              <Tool icon="exportFile" label="导出文件" />
            </div>
          </div>

          <div className="flex min-h-0 flex-1 pl-px">
            <Tree />

            <main className="ml-1.5 flex min-w-0 flex-1 flex-col border-l border-[#dcdee6]">
              <div role="tablist" className="flex h-[38px] shrink-0 bg-[#e4e7ef] pt-px text-lg font-light text-black">
                <button type="button" role="tab" aria-selected="true" className="w-[150px] border-t-4 border-[#1f8ceb] bg-white">
                  加密容器文件
                </button>
              </div>

              <div className="flex h-[58px] shrink-0 items-center pt-1.5 pl-[11px] text-lg font-light text-black">
                <span className="flex items-center gap-3">
                  <Check label="全选" />
                  <span className="whitespace-nowrap">全选(1/2)</span>
                </span>
                <button type="button" className="ml-2 flex items-center gap-3 whitespace-nowrap">
                  <svg viewBox="0 0 18 16" className="h-4 w-[18px]" stroke="#c4c7cd" strokeWidth="1.300">
                    <path d="M5.500 2H18M5.500 8H18M5.500 14H18" />
                    <path d="M0 2h2.500M0 8h2.500M0 14h2.500" stroke="#a0a4ad" strokeWidth="2.500" />
                  </svg>
                  显示列
                </button>
                <div className="ml-[26px]"><Modes /></div>
                <div className="ml-[25px] flex h-[30px] w-[381px] items-center rounded border border-[#c4c7cd]">
                  <input aria-label="筛选" className="h-full min-w-0 flex-1 bg-transparent px-2 outline-none" />
                  <Magnifier className="mr-1.5 text-[#8b909a]" />
                </div>
                <button type="button" aria-label="筛选列表" className="ml-[21px] flex items-center gap-0.5">
                  <Funnel kind="list" className="h-[22px] w-6 text-[#8b909a]" />
                  <Caret className="text-[#1c2430]" />
                </button>
                <button type="button" aria-label="汇总筛选" className="ml-3.5">
                  <Funnel kind="sum" className="h-[22px] w-6 text-[#8b909a]" />
                </button>
                <button type="button" aria-label="清除筛选" className="ml-[21px]">
                  <Funnel kind="clear" className="h-[22px] w-6 text-[#8b909a]" />
                </button>
              </div>

              <FileTable />
              <div className="mx-2 mt-auto mb-[21px]">
                <div className="h-[5px] w-[61%] rounded-full bg-[#c6c6c6]" />
              </div>

              <div role="tablist" className="flex h-[38px] shrink-0 bg-[#e4e7ef] text-lg font-light text-black">
                <button type="button" role="tab" aria-selected="true" className="mt-px w-20 border-t-4 border-[#1f8ceb] bg-white">
                  属性
                </button>
                <button type="button" role="tab" className="px-[26px] pt-0.5">预览</button>
                <button type="button" role="tab" className="px-6 pt-0.5">16进制</button>
                <button type="button" role="tab" className="px-[26px] pt-0.5">文本</button>
              </div>
              <div className="mr-[18px] ml-[17px] mt-[21px] mb-[21px] h-[339px] shrink-0 rounded border border-[#c6c6ca]" />
            </main>
          </div>

          <footer className="flex h-[34px] shrink-0 items-center border-t border-[#dcdee6] pt-0.5 pl-1.5 text-lg font-light text-[#222]">
            <span className="w-[106px] whitespace-nowrap">16 核心 CPU</span>
            <Meter value={53} label="CPU" />
            <span className="ml-[18px] w-[149px] whitespace-nowrap">内存 15.0G/14.0G</span>
            <Meter value={95} label="内存" />
            <div className="relative mr-6 ml-auto text-black">
              版本: R7.1.5
              <span className="absolute top-2 -right-2.5 font-['Liberation_Sans',sans-serif] text-xs whitespace-nowrap text-black/35">CSDN @2302M</span>
            </div>
          </footer>
        </div>
      </div>
    </div>
  );
}
